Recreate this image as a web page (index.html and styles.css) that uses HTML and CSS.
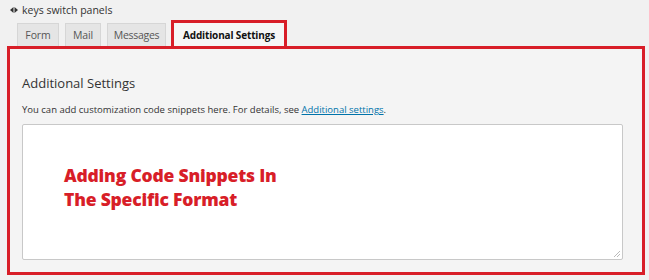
FILE: index.html
```html
<!DOCTYPE html>
<html>
<head>
<meta charset="utf-8">
<link rel="stylesheet" href="styles.css">
</head>
<body>
<div class="hint"><svg class="arrows" width="8" height="6" viewBox="0 0 8 6"><path d="M0 3 L3.5 0 L3.5 6 Z M8 3 L4.5 0 L4.5 6 Z" fill="#333"/></svg>keys switch panels</div>
<div class="tabs">
  <div class="tab tab-form">Form</div>
  <div class="tab tab-mail">Mail</div>
  <div class="tab tab-messages">Messages</div>
  <div class="tab active">Additional Settings</div>
</div>
<div class="panel">
  <h2 class="title">Additional Settings</h2>
  <p class="desc">You can add customization code snippets here. For details, see <a href="#">Additional settings</a>.</p>
  <div class="editor">
    <div class="note">Adding Code Snippets In<br>The Specific Format</div>
    <span class="grip"></span>
  </div>
</div>
</body>
</html>
```
FILE: styles.css
```css
html, body {
  margin: 0;
  padding: 0;
  background: #f1f1f1;
  font-family: "Open Sans", "Noto Sans", sans-serif;
  color: #444;
}
.hint {
  display: flex;
  align-items: center;
  gap: 4px;
  height: 20px;
  padding: 0 0 0 10px;
  box-sizing: border-box;
  font-size: 10.5px;
  line-height: 16px;
  color: #333;
}
.tabs {
  display: flex;
  align-items: flex-end;
  gap: 6px;
  padding-left: 17px;
  height: 26px;
  box-sizing: border-box;
}
.tab {
  height: 23px;
  box-sizing: border-box;
  background: #e5e5e5;
  border: 1px solid #d6d6d6;
  border-bottom: none;
  font-size: 10.5px;
  line-height: 23px;
  text-align: center;
  color: #555;
  letter-spacing: -0.1px;
}
.tab-form { width: 42px; }
.tab-mail { width: 36px; }
.tab-messages { width: 59px; letter-spacing: -0.3px; }
.tab.active {
  height: 26px;
  width: 116px;
  margin-left: -1px;
  background: #f6f6f6;
  border: 3px solid #d81e28;
  border-bottom: none;
  font-weight: 700;
  font-size: 10px;
  letter-spacing: -0.15px;
  color: #111;
  line-height: 24px;
}
.panel {
  margin-left: 7px;
  width: 638px;
  height: 229px;
  box-sizing: border-box;
  border: 3px solid #d81e28;
  background: #f4f4f4;
  padding: 24px 19px 0 12px;
}
.title {
  margin: 0;
  font-size: 13px;
  font-weight: 400;
  line-height: 20px;
  color: #333;
}
.desc {
  margin: 10px 0 0;
  font-size: 9.5px;
  line-height: 14px;
  color: #333;
}
.desc a {
  color: #0073aa;
}
.editor {
  position: relative;
  margin-top: 7px;
  height: 136px;
  box-sizing: border-box;
  background: #fff;
  border: 1px solid #c8c8c8;
  border-radius: 2px;
  padding: 38px 0 0 41px;
}
.note {
  font-family: "Open Sans", "Noto Sans", sans-serif;
  font-weight: 800;
  font-size: 17.5px;
  line-height: 24px;
  color: #d81e28;
  letter-spacing: -0.2px;
}
.grip {
  position: absolute;
  right: 2px;
  bottom: 2px;
  width: 6px;
  height: 6px;
  background: linear-gradient(135deg, transparent 45%, #bbb 45%, #bbb 55%, transparent 55%, transparent 70%, #bbb 70%, #bbb 80%, transparent 80%);
}
```
